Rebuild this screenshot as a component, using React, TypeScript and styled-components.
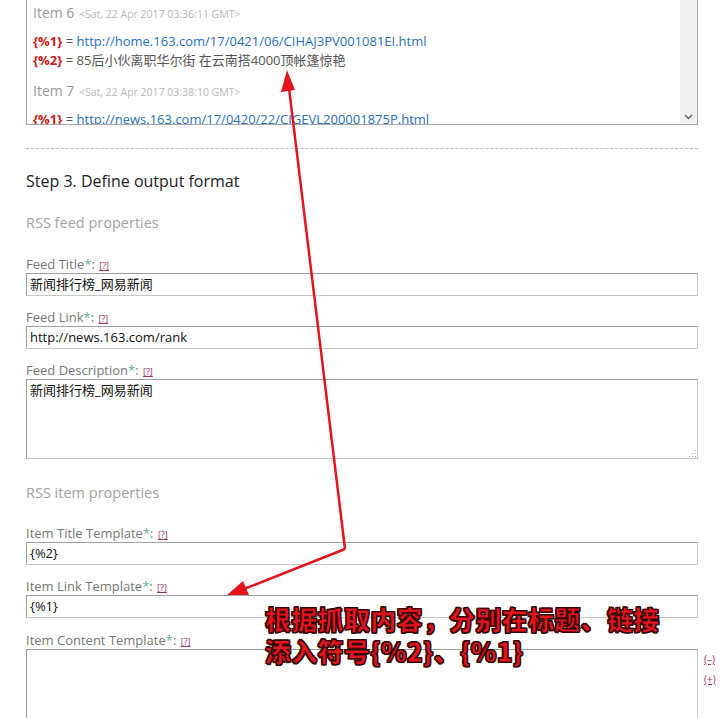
import React from "react";
import styled, { createGlobalStyle } from "styled-components";

const Global = createGlobalStyle`
  html, body { margin: 0; padding: 0; background: #fff; }
  body { font-family: "Open Sans", "Noto Sans CJK SC", sans-serif; width: 720px; height: 718px; overflow: hidden; }
`;

const Page = styled.div`
  position: relative;
  width: 720px;
  height: 718px;
  overflow: hidden;
  padding: 0 22px 0 26px;
  box-sizing: border-box;
`;

const ScrollBox = styled.div`
  display: flex;
  height: 125px;
  border: 1px solid #a9a9a9;
  border-top: none;
  box-sizing: border-box;
  overflow: hidden;
`;

const ScrollContent = styled.div`
  flex: 1;
  padding: 3px 6px 0;
  overflow: hidden;
`;

const Scrollbar = styled.div`
  width: 17px;
  background: #f0f0f0;
  display: flex;
  flex-direction: column;
  justify-content: flex-end;
  align-items: center;
  padding-bottom: 4px;
  color: #606060;
`;

const ItemHead = styled.div`
  font-size: 14px;
  color: #9a9a9a;
  height: 20px;
  line-height: 20px;
  margin-bottom: 9px;
  white-space: nowrap;
`;

const DateText = styled.span`
  font-size: 10.5px;
  color: #b8b8b8;
  margin-left: 1px;
`;

const VarLine = styled.div`
  font-size: 13px;
  line-height: 19px;
  color: #555;
  white-space: nowrap;
`;

const VarName = styled.span`
  color: #cc1a1a;
  font-weight: 700;
`;

const Url = styled.span<{ $under?: boolean }>`
  color: #2b6fc0;
  text-decoration: ${(p) => (p.$under ? "underline" : "none")};
`;

const ItemGroup = styled.div`
  margin-bottom: 11px;
`;

const Divider = styled.div`
  border-top: 1px dashed #c4c4c4;
  margin-top: 23px;
`;

const StepTitle = styled.div`
  font-size: 16px;
  color: #222;
  margin-top: 21px;
  line-height: 22px;
`;

const SectionTitle = styled.div<{ $top: number }>`
  font-size: 14.5px;
  color: #a3a3a3;
  margin-top: ${(p) => p.$top}px;
  line-height: 20px;
`;

const Field = styled.div<{ $top: number }>`
  margin-top: ${(p) => p.$top}px;
`;

const Label = styled.div`
  font-size: 13px;
  color: #777;
  line-height: 16px;
  height: 16px;
  white-space: nowrap;
`;

const Star = styled.span`
  color: #5fae9c;
`;

const Help = styled.span`
  font-size: 9px;
  color: #a0306a;
  text-decoration: underline;
  margin-left: 1px;
`;

const Input = styled.div`
  height: 23px;
  border: 1px solid #a0a0a0;
  border-right-color: #c8c8c8;
  border-bottom-color: #c8c8c8;
  box-sizing: border-box;
  font-size: 13px;
  line-height: 21px;
  padding-left: 3px;
  color: #111;
  margin-top: 1px;
`;

const TextArea = styled(Input)<{ $h: number }>`
  height: ${(p) => p.$h}px;
  position: relative;
  line-height: 20px;
`;

const Grip = styled.div`
  position: absolute;
  right: 1px;
  bottom: 1px;
  width: 8px;
  height: 8px;
  background: radial-gradient(circle, #aaa 0.8px, transparent 1px) 0 0 / 3px 3px;
  clip-path: polygon(100% 0, 100% 100%, 0 100%);
`;

const ContentRow = styled.div`
  display: flex;
  position: relative;
`;

const SideLinks = styled.div`
  position: absolute;
  left: 100%;
  top: 4px;
  margin-left: 6px;
  display: flex;
  flex-direction: column;
  gap: 6px;
  font-size: 10px;
  line-height: 14px;
  color: #a0306a;
`;

const SideLink = styled.span`
  text-decoration: underline;
`;

const Overlay = styled.svg`
  position: absolute;
  left: 0;
  top: 0;
  pointer-events: none;
`;

const Note = styled.div`
  position: absolute;
  left: 265px;
  top: 603px;
  font-family: "Noto Sans CJK SC", sans-serif;
  font-weight: 900;
  font-size: 26px;
  line-height: 32px;
  color: #e8141c;
  letter-spacing: 0.3px;
  white-space: nowrap;
  -webkit-text-stroke: 1px #3a0a0a;
  text-shadow: 1px 1px 0 #2a0000, -1px -1px 0 #2a0000, 1px -1px 0 #2a0000, -1px 1px 0 #2a0000;
`;

export default function App() {
  return (
    <>
      <Global />
      <Page>
        <ScrollBox>
          <ScrollContent>
            <ItemGroup>
              <ItemHead>
                Item 6 <DateText>&lt;Sat, 22 Apr 2017 03:36:11 GMT&gt;</DateText>
              </ItemHead>
              <VarLine>
                <VarName>{"{%1}"}</VarName> = <Url>http://home.163.com/17/0421/06/CIHAJ3PV001081EI.html</Url>
              </VarLine>
              <VarLine>
                <VarName>{"{%2}"}</VarName> = 85后小伙离职华尔街 在云南搭4000顶帐篷惊艳
              </VarLine>
            </ItemGroup>
            <ItemGroup>
              <ItemHead>
                Item 7 <DateText>&lt;Sat, 22 Apr 2017 03:38:10 GMT&gt;</DateText>
              </ItemHead>
              <VarLine>
                <VarName>{"{%1}"}</VarName> = <Url $under>http://news.163.com/17/0420/22/CIGEVL200001875P.html</Url>
              </VarLine>
            </ItemGroup>
          </ScrollContent>
          <Scrollbar>
            <svg width="9" height="6" viewBox="0 0 9 6">
              <path d="M1 1 L4.5 4.5 L8 1" fill="none" stroke="#606060" strokeWidth="1.3" />
            </svg>
          </Scrollbar>
        </ScrollBox>
        <Divider />
        <StepTitle>Step 3. Define output format</StepTitle>
        <SectionTitle $top={21}>RSS feed properties</SectionTitle>
        <Field $top={23}>
          <Label>
            Feed Title<Star>*</Star>: <Help>[?]</Help>
          </Label>
          <Input>新闻排行榜_网易新闻</Input>
        </Field>
        <Field $top={13}>
          <Label>
            Feed Link<Star>*</Star>: <Help>[?]</Help>
          </Label>
          <Input>http://news.163.com/rank</Input>
        </Field>
        <Field $top={13}>
          <Label>
            Feed Description<Star>*</Star>: <Help>[?]</Help>
          </Label>
          <TextArea $h={80}>
            新闻排行榜_网易新闻
            <Grip />
          </TextArea>
        </Field>
        <SectionTitle $top={24}>RSS item properties</SectionTitle>
        <Field $top={22}>
          <Label>
            Item Title Template<Star>*</Star>: <Help>[?]</Help>
          </Label>
          <Input>{"{%2}"}</Input>
        </Field>
        <Field $top={13}>
          <Label>
            Item Link Template<Star>*</Star>: <Help>[?]</Help>
          </Label>
          <Input>{"{%1}"}</Input>
        </Field>
        <Field $top={14}>
          <Label>
            Item Content Template<Star>*</Star>: <Help>[?]</Help>
          </Label>
          <ContentRow>
            <TextArea $h={90} style={{ flex: 1 }} />
            <SideLinks>
              <SideLink>(–)</SideLink>
              <SideLink>(+)</SideLink>
            </SideLinks>
          </ContentRow>
        </Field>
        <Overlay width="720" height="718" viewBox="0 0 720 718">
          <line x1="345" y1="549" x2="289" y2="88" stroke="#e3141c" strokeWidth="2.5" />
          <polygon points="287,70 281,92 295,90" fill="#e3141c" />
          <line x1="345" y1="549" x2="244" y2="589" stroke="#e3141c" strokeWidth="2.5" />
          <polygon points="227,595 243,581 249,595" fill="#e3141c" />
        </Overlay>
        <Note>
          根据抓取内容，分别在标题、链接
          <br />
          添入符号{"{%2}"}、{"{%1}"}
        </Note>
      </Page>
    </>
  );
}
